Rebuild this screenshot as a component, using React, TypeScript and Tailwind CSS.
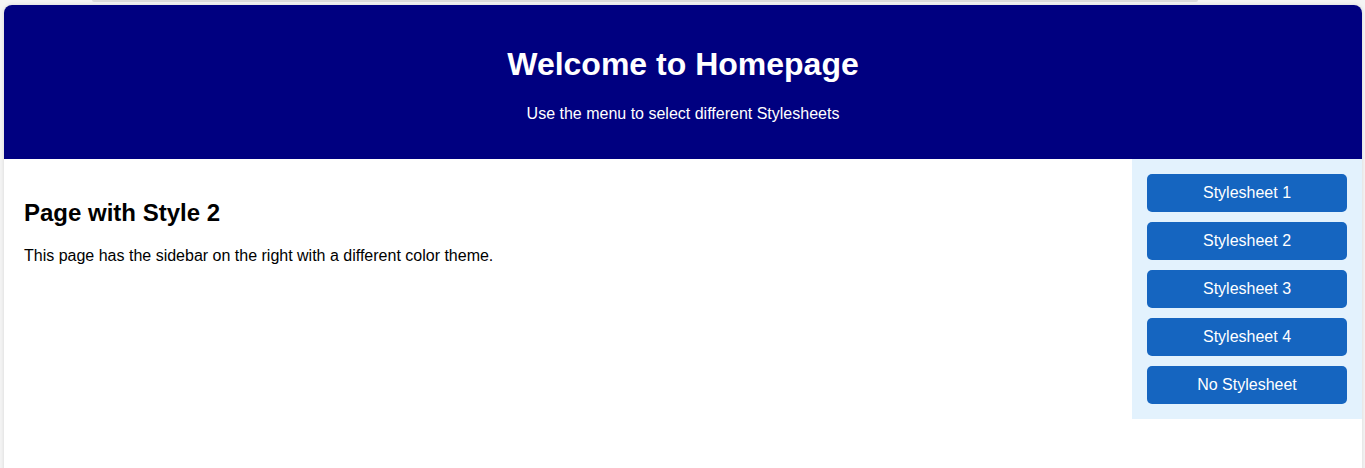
import React from "react";

const buttons = ["Stylesheet 1", "Stylesheet 2", "Stylesheet 3", "Stylesheet 4", "No Stylesheet"];

const App: React.FC = () => {
  return (
    <div className="min-h-[480px] bg-[#f4f4f4] pl-[4px] pr-[3px] font-['Liberation_Sans',Arial,sans-serif]">
      {/* leftover edge of the element above */}
      <div className="ml-[88px] mr-[164px] h-[2px] rounded-b-md bg-[#dcdcdc]" />

      <div className="mt-[3px] overflow-hidden rounded-t-lg bg-white shadow-[0_0_4px_rgba(0,0,0,0.12)]">
        {/* HEADER */}
        <header className="bg-[#000080] px-5 py-5 text-center text-white">
          <h1 className="my-[21px] text-[32px] font-bold leading-[37px]">Welcome to Homepage</h1>
          <p className="mt-[22px] mb-4 text-base leading-[18px]">Use the menu to select different Stylesheets</p>
        </header>

        {/* BODY */}
        <div className="flex h-[330px] items-start">
          <main className="flex-1 p-5 text-black">
            <h2 className="my-5 text-2xl font-bold leading-7">Page with Style 2</h2>
            <p className="text-base leading-[18px]">
              This page has the sidebar on the right with a different color theme.
            </p>
          </main>

          <aside className="w-[230px] bg-[#e3f2fd] p-[15px]">
            <div className="flex flex-col gap-[10px]">
              {buttons.map((b) => (
                <button
                  key={b}
                  className="h-[38px] w-[200px] rounded-[5px] bg-[#1565c0] text-base text-white"
                >
                  {b}
                </button>
              ))}
            </div>
          </aside>
        </div>
      </div>
    </div>
  );
};

export default App;
